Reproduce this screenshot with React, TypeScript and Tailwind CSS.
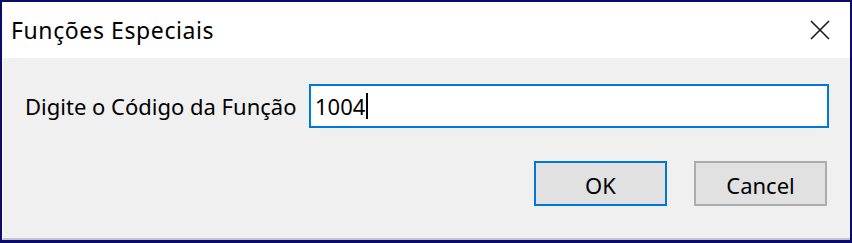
import React from "react";

export default function App() {
  const font = { fontFamily: '"Noto Sans", "Open Sans", sans-serif' };
  return (
    <div className="w-[852px] h-[243px] bg-[#0b0b6e] pt-[2px] pl-[2px] pr-[2px] pb-[3px]" style={font}>
      <div className="flex h-full flex-col bg-[#f0f0f0] border-b-[2px] border-b-[#c4c4c4] border-l border-l-[#fafafa]">
        <div className="flex h-[56px] items-center justify-between bg-white pl-[8px] pr-[18px]">
          <span className="text-[23px] text-black leading-none tracking-[0.6px]">Funções Especiais</span>
          <svg width="22" height="22" viewBox="0 0 22 22" className="mr-[1px]">
            <path d="M2 2 L20 20 M20 2 L2 20" stroke="#1a1a1a" strokeWidth="1.6" fill="none" />
          </svg>
        </div>
        <div className="flex items-center pl-[22px] pr-[21px] mt-[26px]">
          <span className="w-[284px] shrink-0 text-[22px] text-black leading-none">Digite o Código da Função</span>
          <div className="flex h-[44px] flex-1 items-center border-2 border-[#0078d7] bg-white pl-[4px]">
            <span className="text-[22px] text-black leading-none">1004</span>
            <span className="ml-[1px] h-[26px] w-[2px] bg-black" />
          </div>
        </div>
        <div className="flex justify-end gap-[27px] pr-[23px] mt-[33px]">
          <button className="flex h-[45px] w-[133px] items-center justify-center border-2 border-[#0078d7] bg-[#e1e1e1] pt-[4px] text-[22px] text-black">
            OK
          </button>
          <button className="flex h-[45px] w-[133px] items-center justify-center border-2 border-[#adadad] bg-[#e1e1e1] pt-[4px] text-[22px] text-black">
            Cancel
          </button>
        </div>
      </div>
    </div>
  );
}
